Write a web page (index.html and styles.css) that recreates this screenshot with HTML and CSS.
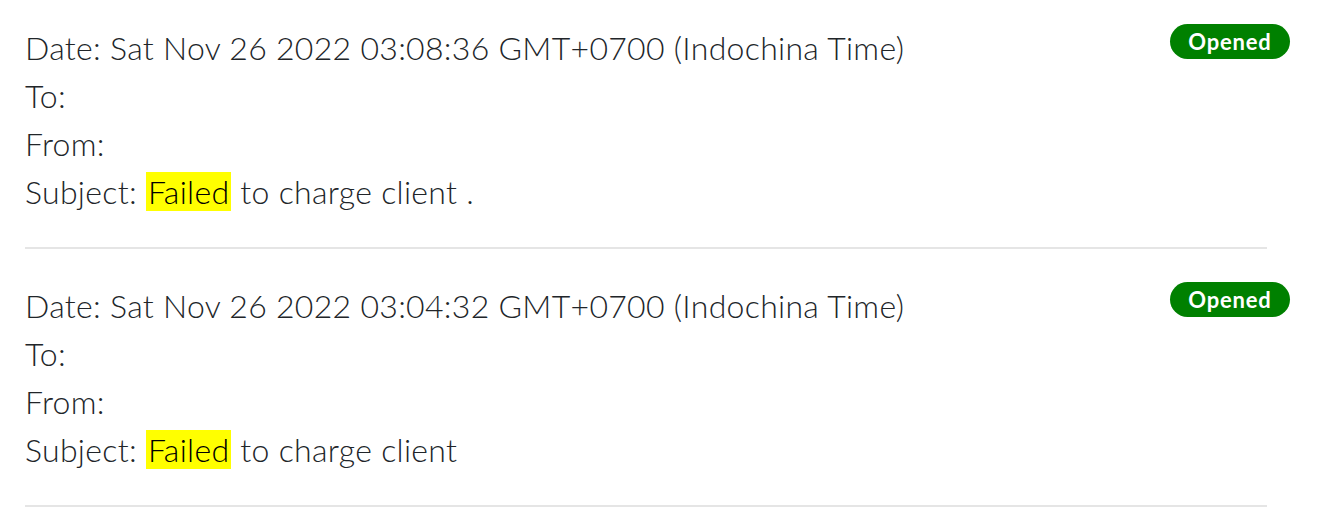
FILE: index.html
```html
<!DOCTYPE html>
<html>
<head>
<meta charset="utf-8">
<link rel="stylesheet" href="styles.css">
</head>
<body>
<div class="list">
  <div class="mail">
    <div class="mail-row">
      <div class="mail-info">
        <div class="line">Date: Sat Nov 26 2022 03:08:36 GMT+0700 (Indochina Time)</div>
        <div class="line">To:</div>
        <div class="line">From:</div>
        <div class="line">Subject: <span class="hl">Failed</span> to charge client .</div>
      </div>
      <span class="badge">Opened</span>
    </div>
    <div class="sep"></div>
  </div>
  <div class="mail">
    <div class="mail-row">
      <div class="mail-info">
        <div class="line">Date: Sat Nov 26 2022 03:04:32 GMT+0700 (Indochina Time)</div>
        <div class="line">To:</div>
        <div class="line">From:</div>
        <div class="line">Subject: <span class="hl">Failed</span> to charge client</div>
      </div>
      <span class="badge">Opened</span>
    </div>
    <div class="sep"></div>
  </div>
</div>
</body>
</html>
```
FILE: styles.css
```css
html, body {
  margin: 0;
  padding: 0;
  background: #ffffff;
}
body {
  font-family: Lato, "Noto Sans", sans-serif;
  color: #212529;
}
.list {
  padding: 24px 37px 0 25px;
}
.mail-row {
  display: flex;
  justify-content: space-between;
  align-items: flex-start;
}
.line {
  font-size: 32px;
  font-weight: 300;
  letter-spacing: 0.3px;
  line-height: 48px;
  height: 48px;
  white-space: nowrap;
}
.hl {
  background: #ffff00;
  color: #000;
  padding: 0 2px;
}
.badge {
  display: inline-flex;
  align-items: center;
  justify-content: center;
  width: 120px;
  height: 35px;
  border-radius: 18px;
  background: #008000;
  color: #fff;
  font-weight: 700;
  font-size: 22px;
  letter-spacing: 0.8px;
  box-sizing: border-box;
}
.sep {
  margin: 31px 23px 33px 0;
  height: 2px;
  background: #e5e5e5;
}
```
